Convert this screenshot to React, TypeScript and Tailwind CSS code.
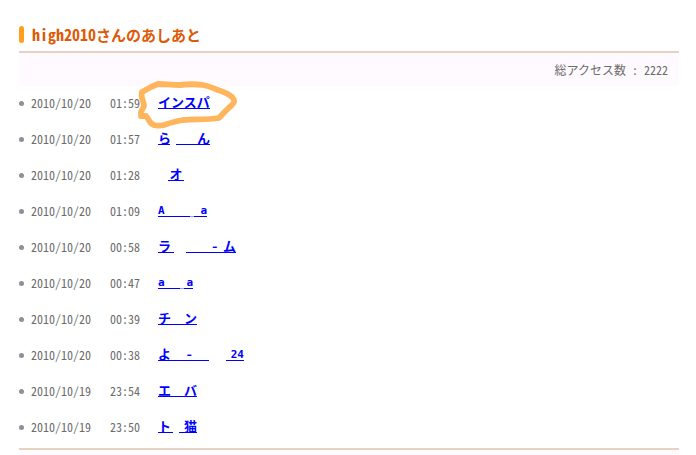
type Piece = {
  text?: string;
  latin?: boolean;
  className: string;
};

type Visit = {
  date: string;
  time: string;
  label: string;
  name: Piece[];
};

// Names are partly blanked out, so each one is a run of short underlined pieces
const visits: Visit[] = [
  {
    date: "2010/10/20",
    time: "01:59",
    label: "インスパ",
    name: [{ text: "インスパ", className: "w-[52px] border-b" }],
  },
  {
    date: "2010/10/20",
    time: "01:57",
    label: "ら ん",
    name: [
      { text: "ら", className: "w-3 border-b" },
      { className: "w-1.5" },
      { text: "ん", className: "w-[34px] border-b text-right" },
    ],
  },
  {
    date: "2010/10/20",
    time: "01:28",
    label: "オ",
    name: [
      { className: "w-2.5" },
      { text: "オ", className: "w-4 border-b text-center" },
    ],
  },
  {
    date: "2010/10/20",
    time: "01:09",
    label: "A a",
    name: [
      { text: "A", latin: true, className: "w-8 border-b" },
      { className: "w-1 border-b border-[#9c9cff]" },
      { text: "a", latin: true, className: "w-[13px] border-b text-right" },
    ],
  },
  {
    date: "2010/10/20",
    time: "00:58",
    label: "ラ ム",
    name: [
      { text: "ラ", className: "w-4 border-b" },
      { className: "w-3" },
      { text: "-", className: "w-8 border-b text-right" },
      { text: "ム", className: "w-[18px] border-b text-right" },
    ],
  },
  {
    date: "2010/10/20",
    time: "00:47",
    label: "a a",
    name: [
      { text: "a", latin: true, className: "w-[22px] border-b" },
      { className: "w-1 border-b border-[#9c9cff]" },
      { text: "a", latin: true, className: "w-[9px] border-b text-right" },
    ],
  },
  {
    date: "2010/10/20",
    time: "00:39",
    label: "チ ン",
    name: [
      { text: "チ", className: "w-[26px] border-b" },
      { text: "ン", className: "w-[13px] border-b" },
    ],
  },
  {
    date: "2010/10/20",
    time: "00:38",
    label: "よ 24",
    name: [
      { text: "よ", className: "w-7 border-b" },
      { text: "-", className: "w-[23px] border-b" },
      { className: "w-[17px]" },
      { text: "24", latin: true, className: "w-[18px] border-b text-right" },
    ],
  },
  {
    date: "2010/10/19",
    time: "23:54",
    label: "エ バ",
    name: [
      { text: "エ", className: "w-[26px] border-b" },
      { text: "バ", className: "w-[13px] border-b" },
    ],
  },
  {
    date: "2010/10/19",
    time: "23:50",
    label: "ト 猫",
    name: [
      { text: "ト", className: "w-[15px] border-b" },
      { className: "w-1.5" },
      { text: "猫", className: "w-[18px] border-b text-right" },
    ],
  },
];

function VisitorLink({ visit }: { visit: Visit }) {
  return (
    <a
      href="#"
      aria-label={visit.label}
      className="flex font-bold text-[#0000ff]"
    >
      {visit.name.map((piece, i) => (
        <span
          key={i}
          className={`h-3 whitespace-nowrap ${piece.className} ${
            piece.latin
              ? "font-['DejaVu_Sans_Mono',monospace] text-[11px] leading-3"
              : "text-[13px] leading-[9px]"
          }`}
        >
          {piece.text}
        </span>
      ))}
    </a>
  );
}

function Scribble() {
  return (
    <svg
      className="pointer-events-none absolute -top-[17px] -left-[22px] h-[50px] w-[104px]"
      viewBox="136 80 104 50"
      fill="none"
      stroke="#ffb55c"
      strokeWidth="5.8"
      strokeLinecap="round"
      strokeLinejoin="round"
      aria-hidden="true"
    >
      <path d="M142 92 L151 87 L158 84 C166 84 170 85 180 85 C188 84 196 84 203 85 C209 86 213 88 218 90 C224 92 229 94 232 97 C235 100 235 102 232 105 C227 109 224 113 219 118 C207 120 195 119 183 120 C176 121 170 123 164 125 C160 126 154 126 152 124 C149 122 149 119 146 116 L141 116 L141 112 L144 106 C144 101 140 97 142 92 Z" />
    </svg>
  );
}

export default function App() {
  return (
    <div className="min-h-screen bg-white pt-6 pr-[17px] pl-[19px] font-['Noto_Sans_CJK_JP',sans-serif] text-xs text-[#6c6c6c] [font-feature-settings:'hwid']">
      {/* Heading */}
      <header className="flex h-[27px] items-start gap-2 pt-0.5">
        <span className="h-[17px] w-[5px] rounded-sm bg-[#ff9f1c]" />
        <h1 className="text-[15px] leading-[17px] font-bold text-[#dd5a08]">
          <span className="text-base leading-[17px]">high2010</span>
          さんのあしあと
        </h1>
      </header>

      {/* Total count */}
      <div className="flex h-[35px] items-center justify-end border-t-2 border-[#e6d2c0] bg-[#fffaff] pr-[11px]">
        <p>総アクセス数 : 2222</p>
      </div>

      {/* Footprints */}
      <ul className="-mt-px border-b-2 border-[#e6d2c0] pb-[3px]">
        {visits.map((visit) => (
          <li key={visit.date + visit.time} className="flex h-9 items-center">
            <span className="mr-[7px] size-[5px] rounded-full bg-[#909090]" />
            <time className="w-[79px]">{visit.date}</time>
            <time className="w-12">{visit.time}</time>
            <div className="relative">
              <VisitorLink visit={visit} />
              {visit.label === "インスパ" && <Scribble />}
            </div>
          </li>
        ))}
      </ul>
      <div className="h-[5px] bg-[#fffaff]" />
    </div>
  );
}
